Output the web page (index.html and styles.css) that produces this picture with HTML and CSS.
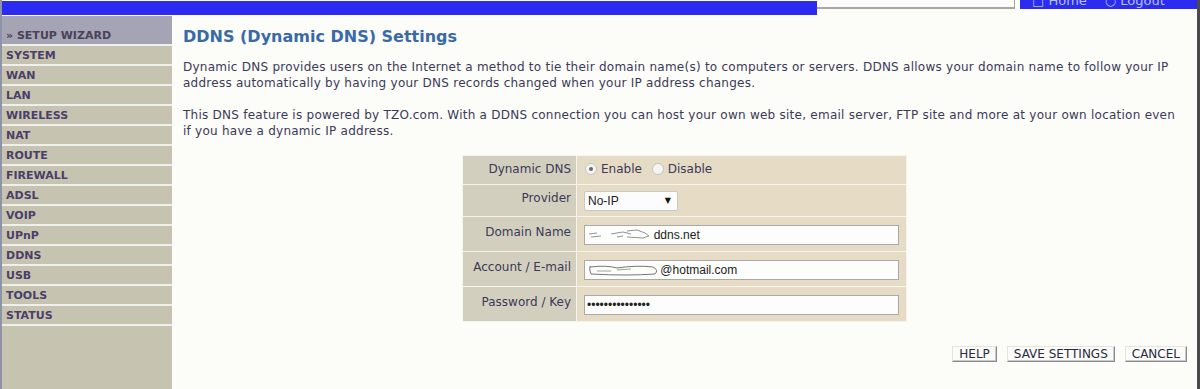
FILE: index.html
```html
<!DOCTYPE html>
<html lang="en">
<head>
    <meta charset="UTF-8">
    <meta name="viewport" content="width=device-width, initial-scale=1.0">
    <title>DDNS Settings</title>
    <link rel="stylesheet" href="styles.css">
</head>
<body>
    <div class="page">
        <div class="topbar">
            <div class="brand-bar"></div>
            <div class="search-box"></div>
            <div class="top-links">
                <span class="top-link">&#9633; Home</span>
                <span class="top-link">&#9675; Logout</span>
            </div>
        </div>

        <div class="main">
            <nav class="sidebar">
                <a class="nav-wizard" href="#">&raquo; SETUP WIZARD</a>
                <a class="nav-item" href="#">SYSTEM</a>
                <a class="nav-item" href="#">WAN</a>
                <a class="nav-item" href="#">LAN</a>
                <a class="nav-item" href="#">WIRELESS</a>
                <a class="nav-item" href="#">NAT</a>
                <a class="nav-item" href="#">ROUTE</a>
                <a class="nav-item" href="#">FIREWALL</a>
                <a class="nav-item" href="#">ADSL</a>
                <a class="nav-item" href="#">VOIP</a>
                <a class="nav-item" href="#">UPnP</a>
                <a class="nav-item" href="#">DDNS</a>
                <a class="nav-item" href="#">USB</a>
                <a class="nav-item" href="#">TOOLS</a>
                <a class="nav-item" href="#">STATUS</a>
            </nav>

            <div class="content">
                <h1>DDNS (Dynamic DNS) Settings</h1>
                <p>Dynamic DNS provides users on the Internet a method to tie their domain name(s) to computers or servers. DDNS allows your domain name to follow your IP address automatically by having your DNS records changed when your IP address changes.</p>
                <p>This DNS feature is powered by TZO.com. With a DDNS connection you can host your own web site, email server, FTP site and more at your own location even if you have a dynamic IP address.</p>

                <form class="ddns-form">
                    <table class="settings-table">
                        <tr class="row-radio">
                            <td class="label">Dynamic DNS</td>
                            <td class="value">
                                <label class="radio"><input type="radio" name="ddns" checked> Enable</label>
                                <label class="radio"><input type="radio" name="ddns"> Disable</label>
                            </td>
                        </tr>
                        <tr class="row-select">
                            <td class="label">Provider</td>
                            <td class="value">
                                <div class="select-wrap">
                                    <select>
                                        <option>No-IP</option>
                                        <option>TZO</option>
                                        <option>DynDNS</option>
                                    </select>
                                    <span class="select-arrow">&#9660;</span>
                                </div>
                            </td>
                        </tr>
                        <tr>
                            <td class="label">Domain Name</td>
                            <td class="value">
                                <div class="field-wrap">
                                    <input type="text" class="text-input" value="                    ddns.net">
                                    <svg class="scribble" width="64" height="14" viewBox="0 0 64 14">
                                        <path d="M2 6 L10 5 M4 9 L14 8 M24 6 L36 4 L44 6 M40 3 L50 2 L58 5 L62 8 L56 10 L40 9 M30 9 L36 8" fill="none" stroke="#777" stroke-width="0.8"/>
                                    </svg>
                                </div>
                            </td>
                        </tr>
                        <tr>
                            <td class="label">Account / E-mail</td>
                            <td class="value">
                                <div class="field-wrap">
                                    <input type="text" class="text-input" value="                      @hotmail.com">
                                    <svg class="scribble" width="72" height="14" viewBox="0 0 72 14">
                                        <path d="M3 3 Q2 7 4 11 M3 4 Q20 2 30 5 Q50 2 66 4 Q72 7 68 11 Q40 13 4 11" fill="none" stroke="#666" stroke-width="0.9"/>
                                        <path d="M10 8 L24 8 M30 7 L44 6" fill="none" stroke="#888" stroke-width="0.8"/>
                                    </svg>
                                </div>
                            </td>
                        </tr>
                        <tr>
                            <td class="label">Password / Key</td>
                            <td class="value">
                                <input type="password" class="text-input" value="password1234567">
                            </td>
                        </tr>
                    </table>

                    <div class="actions">
                        <button type="button" class="btn">HELP</button>
                        <button type="button" class="btn">SAVE SETTINGS</button>
                        <button type="button" class="btn">CANCEL</button>
                    </div>
                </form>
            </div>
        </div>
    </div>
</body>
</html>
```

FILE: styles.css
```css
* {
    margin: 0;
    padding: 0;
    box-sizing: border-box;
}

body {
    font-family: 'DejaVu Sans', Verdana, sans-serif;
    background-color: #fcfcf9;
    color: #3b3a58;
    height: 100vh;
    overflow: hidden;
}

.page {
    height: 100vh;
    border-left: 2px solid #8f93a8;
    border-right: 3px solid #4a4a4a;
    display: flex;
    flex-direction: column;
}

/* top strip */
.topbar {
    display: flex;
    align-items: flex-start;
    height: 16px;
    flex-shrink: 0;
}

.brand-bar {
    width: 815px;
    height: 14px;
    margin-top: 1px;
    background-color: #2b2bf2;
}

.search-box {
    width: 198px;
    height: 9px;
    background-color: #fcfcfa;
    border-right: 1px solid #a3a3a3;
    border-bottom: 2px solid #a8a8a0;
}

.top-links {
    flex: 1;
    height: 9px;
    margin-left: 5px;
    overflow: hidden;
    background-color: #2b2bf2;
    padding-left: 12px;
    display: flex;
    gap: 18px;
}

.top-link {
    font-size: 13px;
    line-height: 13px;
    margin-top: -6px;
    color: #b8c0f8;
}

/* main area */
.main {
    flex: 1;
    display: flex;
}

.sidebar {
    width: 170px;
    flex-shrink: 0;
    background-color: #c6c3b1;
    display: flex;
    flex-direction: column;
}

.sidebar a {
    display: block;
    text-decoration: none;
    font-size: 11px;
    font-weight: bold;
    color: #4a3f68;
    padding-left: 4px;
    border-bottom: 2px solid #eef0ee;
}

.nav-wizard {
    height: 30px;
    line-height: 16px;
    padding-top: 12px;
    background-color: #a5a4b5;
    color: #4a4258 !important;
}

.nav-item {
    height: 20px;
    line-height: 16px;
    padding-top: 2px;
}

.content {
    flex: 1;
    padding: 12px 0 0 11px;
}

h1 {
    font-size: 16px;
    color: #3a6aa6;
    line-height: 18px;
    margin-bottom: 13px;
}

.content p {
    font-size: 12px;
    line-height: 16px;
    letter-spacing: 0.25px;
    margin-bottom: 16px;
    padding-right: 10px;
}

.ddns-form {
    margin-left: -11px;
}

.settings-table {
    margin: 2px auto 0;
    width: 445px;
    border-collapse: collapse;
}

.settings-table td {
    border: 1px solid #f6f4ee;
    vertical-align: top;
}

.settings-table .label {
    width: 116px;
    background-color: #d3cfbf;
    text-align: right;
    font-size: 12px;
    line-height: 15px;
    padding: 8px 5px 6px 4px;
    white-space: nowrap;
}

.settings-table .value {
    background-color: #e6dbc5;
    padding: 8px 7px 6px 7px;
    font-size: 12px;
}

.row-radio td {
    height: 29px;
    padding-top: 6px !important;
}

.row-radio .value {
    padding-top: 5px !important;
}

.row-select .label {
    padding-top: 6px;
}

.row-select .value {
    padding-top: 6px;
    padding-bottom: 5px;
}

.radio {
    display: inline-flex;
    align-items: center;
    gap: 4px;
    margin-right: 5px;
    line-height: 16px;
}

.radio input {
    appearance: none;
    width: 12px;
    height: 12px;
    border-radius: 50%;
    border: 1px solid #c4c4c4;
    background-color: #f4f4f2;
    position: relative;
    margin-left: 1px;
}

.radio input:checked::after {
    content: "";
    position: absolute;
    left: 3px;
    top: 3px;
    width: 4px;
    height: 4px;
    border-radius: 50%;
    background-color: #6a6a6a;
}

.select-wrap {
    position: relative;
    width: 94px;
}

.select-wrap select {
    appearance: none;
    width: 94px;
    height: 20px;
    font-family: 'Liberation Sans', Arial, sans-serif;
    font-size: 12px;
    color: #222;
    background-color: #fcfcfc;
    border: 1px solid #c8c8c8;
    border-radius: 2px;
    padding-left: 3px;
}

.select-arrow {
    position: absolute;
    right: 7px;
    top: 5px;
    font-size: 8px;
    color: #111;
    pointer-events: none;
}

.field-wrap {
    position: relative;
}

.text-input {
    display: block;
    width: 315px;
    height: 20px;
    font-family: 'Liberation Sans', Arial, sans-serif;
    font-size: 12px;
    color: #222;
    background-color: #fdfdfc;
    border: 1px solid #a9a9a9;
    padding: 0 2px;
    outline: none;
}

.scribble {
    position: absolute;
    left: 3px;
    top: 3px;
}

.actions {
    display: flex;
    justify-content: flex-end;
    gap: 10px;
    margin-top: 24px;
    padding-right: 10px;
}

.btn {
    font-family: 'DejaVu Sans', Verdana, sans-serif;
    font-size: 12px;
    color: #2a2a40;
    height: 16px;
    line-height: 12px;
    padding: 0 6px;
    background-color: #fbfbf9;
    border: 1px solid;
    border-color: #e8e4d8 #8a8a8a #8a8a8a #e8e4d8;
    box-shadow: inset -1px -1px 0 #c8c8c8;
    cursor: pointer;
}
```
